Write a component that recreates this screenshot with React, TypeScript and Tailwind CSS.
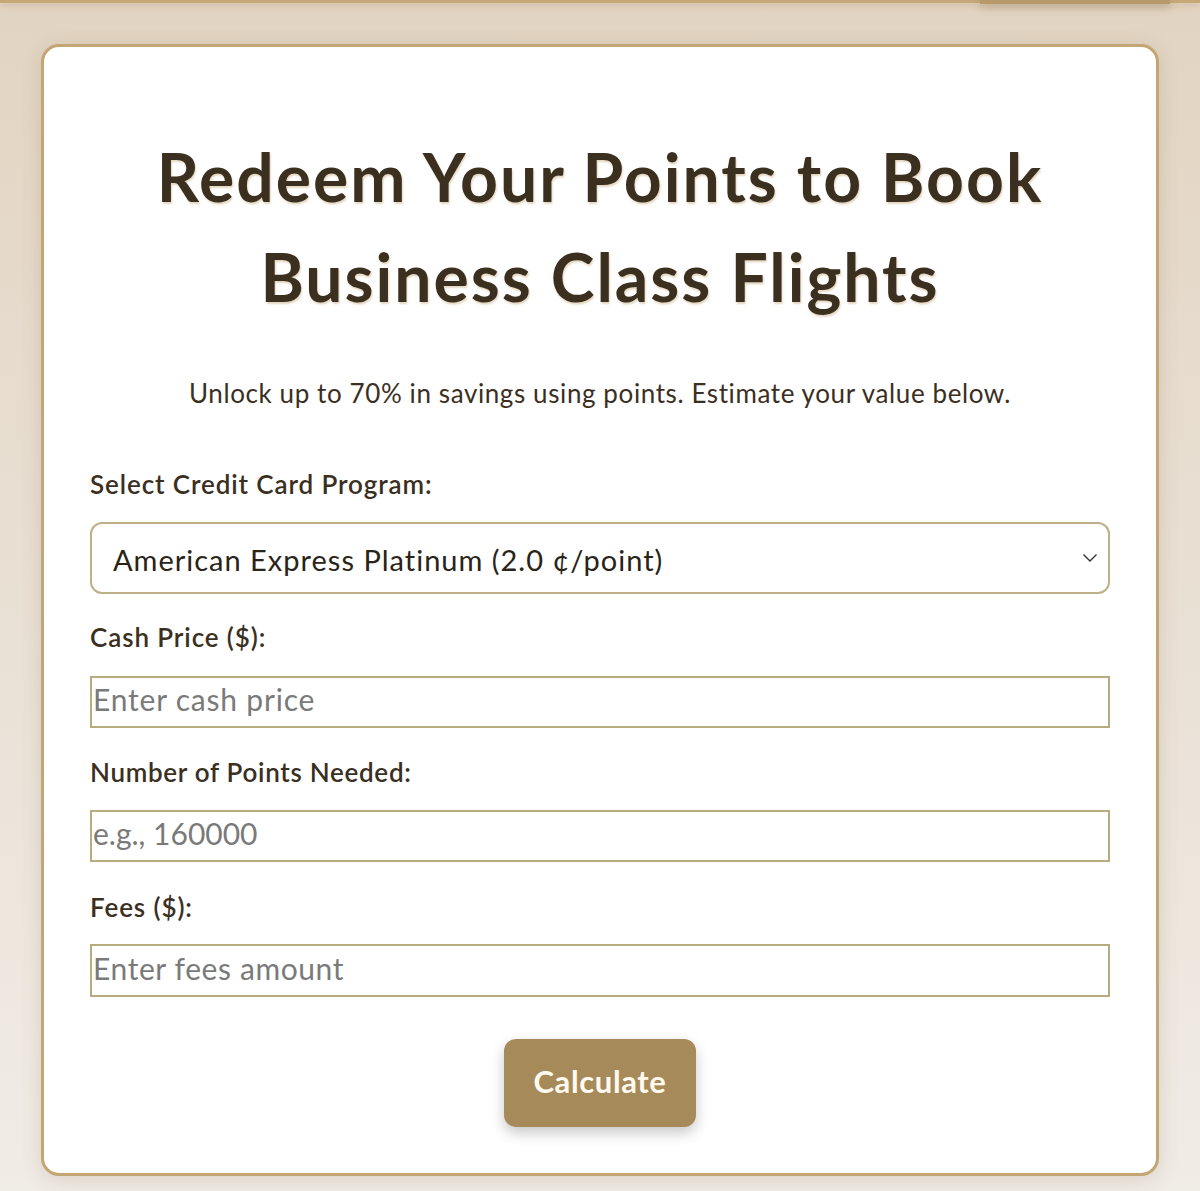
import React from "react";

export default function App() {
  const font = { fontFamily: "Lato, 'Open Sans', sans-serif" };
  return (
    <div
      className="min-h-[1191px] w-full bg-gradient-to-b from-[#e2d4c2] to-[#f0ece6]"
      style={font}
    >
      <div className="relative h-[3px] w-full bg-[#c6a877] shadow-[0_2px_6px_rgba(150,120,70,0.35)]">
        <div className="absolute right-[30px] top-0 h-[4px] w-[190px] bg-[#b89a6a] shadow-[0_3px_8px_rgba(120,95,60,0.45)]" />
      </div>
      <div className="px-[41px] pt-[41px] pb-[15px]">
        <div className="rounded-[18px] border-[3px] border-[#c4a574] bg-white px-[46px] pt-[80px] pb-[46px] shadow-[0_4px_20px_rgba(120,95,60,0.18)]">
          <h1 className="text-center text-[66px] font-bold leading-[100px] tracking-[2px] text-[#3b2f1f] [text-shadow:1px_2px_2px_rgba(196,165,116,0.45)]">
            Redeem Your Points to Book
            <br />
            Business Class Flights
          </h1>
          <p className="mt-[50px] text-center text-[26px] leading-[32px] tracking-[0.6px] text-[#3b2f1f]">
            Unlock up to 70% in savings using points. Estimate your value below.
          </p>

          <label className="mt-[59px] block text-[26px] font-semibold leading-[32px] tracking-[0.9px] text-[#3b2f1f]">
            Select Credit Card Program:
          </label>
          <div className="relative mt-[22px] flex h-[72px] items-center rounded-[12px] border-2 border-[#bfb088] pl-[21px] pt-[3px] text-[29px] tracking-[1px] text-[#2a2418]">
            American Express Platinum (2.0 ¢/point)
            <svg
              className="absolute right-[10px] top-1/2 -translate-y-1/2"
              width="16"
              height="10"
              viewBox="0 0 16 10"
              fill="none"
            >
              <path d="M1.5 1.5 L8 8 L14.5 1.5" stroke="#333" strokeWidth="1.4" />
            </svg>
          </div>

          <label className="mt-[27px] block text-[26px] font-semibold leading-[32px] tracking-[0.9px] text-[#3b2f1f]">
            Cash Price ($):
          </label>
          <div className="mt-[23px] flex h-[52px] items-center border-2 border-[#b9ab80] pb-[6px] pl-[1px] text-[30px] tracking-[0.8px] text-[#7a7a7a]">
            Enter cash price
          </div>

          <label className="mt-[28px] block text-[26px] font-semibold leading-[32px] tracking-[0.7px] text-[#3b2f1f]">
            Number of Points Needed:
          </label>
          <div className="mt-[22px] flex h-[52px] items-center border-2 border-[#b9ab80] pb-[6px] pl-[1px] text-[30px] text-[#7a7a7a]">
            e.g., 160000
          </div>

          <label className="mt-[29px] block text-[26px] font-semibold leading-[32px] tracking-[0.9px] text-[#3b2f1f]">
            Fees ($):
          </label>
          <div className="mt-[21px] flex h-[53px] items-center border-2 border-[#b9ab80] pb-[5px] pl-[1px] text-[30px] tracking-[0.6px] text-[#7a7a7a]">
            Enter fees amount
          </div>

          <div className="mt-[42px] flex justify-center">
            <button className="flex h-[88px] w-[192px] items-center justify-center rounded-[12px] bg-[#a68a5a] pb-[4px] text-[31px] font-bold tracking-[0.6px] text-[#fffaf0] shadow-[0_6px_14px_rgba(0,0,0,0.22)]">
              Calculate
            </button>
          </div>
        </div>
      </div>
    </div>
  );
}
